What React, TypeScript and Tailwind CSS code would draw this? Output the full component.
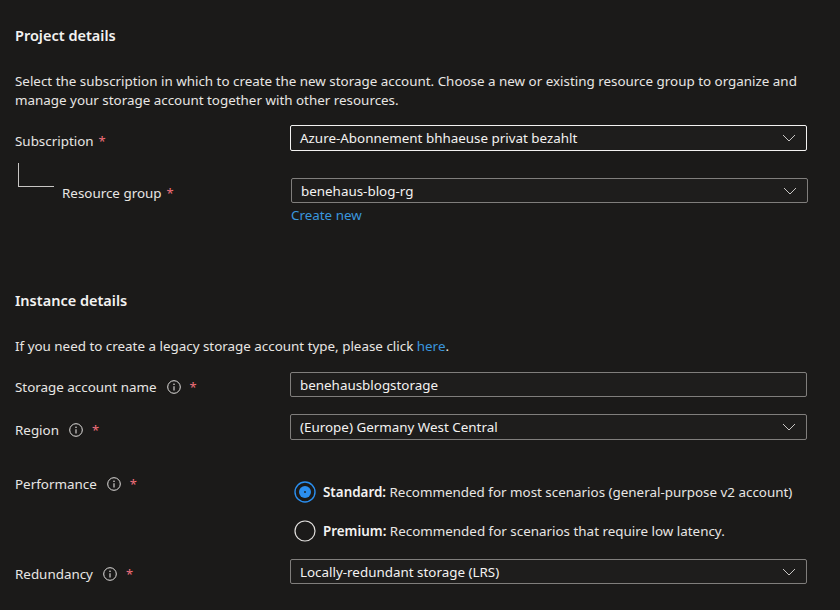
import React from "react";

const FONT = { fontFamily: '"Noto Sans", "Open Sans", sans-serif' };

function Chevron() {
  return (
    <svg width="14" height="8" viewBox="0 0 14 8" className="shrink-0">
      <path d="M1 1 L7 7 L13 1" fill="none" stroke="#c8c6c4" strokeWidth="1" />
    </svg>
  );
}

function Info() {
  return (
    <svg width="14" height="14" viewBox="0 0 14 14" className="shrink-0">
      <circle cx="7" cy="7" r="6.3" fill="none" stroke="#e1dfdd" strokeWidth="1" />
      <circle cx="7" cy="4.2" r="0.8" fill="#e1dfdd" />
      <path d="M7 6.2 V10.4" stroke="#e1dfdd" strokeWidth="1.1" />
    </svg>
  );
}

function Star() {
  return <span className="text-[#f1707b] text-[13px] leading-none">*</span>;
}

function Select({ value, bright, chevron = true, h = "h-[26px]" }: { value: string; bright?: boolean; chevron?: boolean; h?: string }) {
  return (
    <div
      className={`${h} w-[517px] flex items-center justify-between pl-[9px] pr-[10px] rounded-[2px] border bg-[#1e1d1c] ${
        bright ? "border-[#f3f2f1]" : "border-[#807e7c]"
      }`}
    >
      <span className="text-[13.4px] leading-5 text-[#f3f2f1]">{value}</span>
      {chevron && <Chevron />}
    </div>
  );
}

function Radio({ checked }: { checked?: boolean }) {
  return checked ? (
    <svg width="22" height="22" viewBox="0 0 22 22" className="shrink-0">
      <circle cx="11" cy="11" r="10" fill="none" stroke="#2b8ff0" strokeWidth="1.4" />
      <circle cx="11" cy="11" r="6" fill="#2b8ff0" />
      <circle cx="11" cy="11" r="0.9" fill="#1b1a19" />
    </svg>
  ) : (
    <svg width="22" height="22" viewBox="0 0 22 22" className="shrink-0">
      <circle cx="11" cy="11" r="10" fill="none" stroke="#e1dfdd" strokeWidth="1.2" />
    </svg>
  );
}

function FieldLabel({ text, pt }: { text: string; pt: string }) {
  return (
    <div className={`w-[275px] ${pt} flex items-center text-[13.4px] leading-5`}>
      <span>{text}</span>
      <span className="ml-[10px] flex"><Info /></span>
      <span className="ml-[9px] flex"><Star /></span>
    </div>
  );
}

export default function App() {
  return (
    <div className="w-[840px] h-[610px] overflow-hidden bg-[#1b1a19] text-[#e8e6e4]" style={FONT}>
      <div className="px-[15px] pt-[25px] flex flex-col">
        <h2 className="text-[14.5px] leading-5 font-semibold text-[#f3f2f1]">Project details</h2>
        <p className="mt-[27px] text-[13.4px] leading-[19px] w-[805px]">
          Select the subscription in which to create the new storage account. Choose a new or existing resource group to organize and manage your storage account together with other resources.
        </p>

        <div className="mt-[15px] flex items-start">
          <div className="w-[275px] pt-[6px] flex items-center gap-[5px] text-[13.4px] leading-5">
            <span>Subscription</span>
            <Star />
          </div>
          <Select value="Azure-Abonnement bhhaeuse privat bezahlt" bright />
        </div>

        <div className="mt-[27px] flex items-start">
          <div className="w-[276px] flex items-start">
            <div className="ml-[3px] mt-[-15px] w-[36px] h-[24px] border-l border-b border-[#c8c6c4]" />
            <div className="ml-[8px] pt-[5px] flex items-center gap-[5px] text-[13.4px] leading-5">
              <span>Resource group</span>
              <Star />
            </div>
          </div>
          <div className="flex flex-col">
            <Select value="benehaus-blog-rg" h="h-[25px]" />
            <a className="mt-[3px] text-[13.4px] leading-[18px] text-[#3a96dd]">Create new</a>
          </div>
        </div>

        <h2 className="mt-[66px] text-[14.5px] leading-5 font-semibold text-[#f3f2f1]">Instance details</h2>
        <p className="mt-[26px] text-[13.4px] leading-5">
          If you need to create a legacy storage account type, please click <span className="text-[#3a96dd]">here</span>.
        </p>

        <div className="mt-[16px] flex items-start">
          <FieldLabel text="Storage account name" pt="pt-[5px]" />
          <Select value="benehausblogstorage" chevron={false} h="h-[25px]" />
        </div>

        <div className="mt-[17px] flex items-start">
          <FieldLabel text="Region" pt="pt-[6px]" />
          <Select value="(Europe) Germany West Central" />
        </div>

        <div className="mt-[34px] flex items-start">
          <FieldLabel text="Performance" pt="pt-0" />
          <div className="pt-[7px] pl-[4px] flex flex-col gap-[17px] text-[13.4px] leading-5">
            <div className="flex items-center gap-[7px]">
              <Radio checked />
              <span>
                <b className="font-semibold text-[#f3f2f1]">Standard:</b> Recommended for most scenarios (general-purpose v2 account)
              </span>
            </div>
            <div className="flex items-center gap-[7px]">
              <Radio />
              <span>
                <b className="font-semibold text-[#f3f2f1]">Premium:</b> Recommended for scenarios that require low latency.
              </span>
            </div>
          </div>
        </div>

        <div className="mt-[17px] flex items-start">
          <FieldLabel text="Redundancy" pt="pt-[5px]" />
          <Select value="Locally-redundant storage (LRS)" h="h-[25px]" />
        </div>
      </div>
    </div>
  );
}
